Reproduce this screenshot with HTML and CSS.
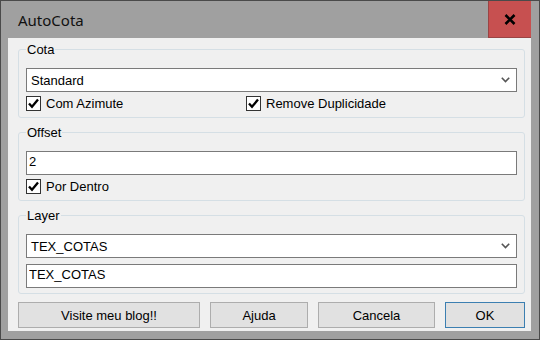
FILE: index.html
```html
<!DOCTYPE html>
<html lang="pt">
<head>
  <meta charset="UTF-8">
  <title>AutoCota</title>
  <link rel="stylesheet" href="styles.css">
</head>
<body>
  <div class="window">
    <div class="titlebar">
      <span class="title">AutoCota</span>
      <div class="close">
        <svg width="12" height="11" viewBox="0 0 12 11"><path d="M1.5 1 L10.5 10 M10.5 1 L1.5 10" stroke="#000" stroke-width="2.6" fill="none"/></svg>
      </div>
    </div>

    <div class="client">
      <fieldset class="group">
        <legend>Cota</legend>
        <div class="combo">
          <span>Standard</span>
          <svg class="chevron" width="9" height="6" viewBox="0 0 9 6"><path d="M0.8 0.8 L4.5 4.6 L8.2 0.8" stroke="#555" stroke-width="1.6" fill="none"/></svg>
        </div>
        <div class="checks">
          <label class="check">
            <span class="box"><svg width="13" height="13" viewBox="0 0 13 13"><path d="M2 6.5 L5 9.8 L11 2.6" stroke="#000" stroke-width="2.3" fill="none"/></svg></span>
            Com Azimute
          </label>
          <label class="check">
            <span class="box"><svg width="13" height="13" viewBox="0 0 13 13"><path d="M2 6.5 L5 9.8 L11 2.6" stroke="#000" stroke-width="2.3" fill="none"/></svg></span>
            Remove Duplicidade
          </label>
        </div>
      </fieldset>

      <fieldset class="group">
        <legend>Offset</legend>
        <input class="field" type="text" value="2">
        <div class="checks">
          <label class="check">
            <span class="box"><svg width="13" height="13" viewBox="0 0 13 13"><path d="M2 6.5 L5 9.8 L11 2.6" stroke="#000" stroke-width="2.3" fill="none"/></svg></span>
            Por Dentro
          </label>
        </div>
      </fieldset>

      <fieldset class="group layer">
        <legend>Layer</legend>
        <div class="combo">
          <span>TEX_COTAS</span>
          <svg class="chevron" width="9" height="6" viewBox="0 0 9 6"><path d="M0.8 0.8 L4.5 4.6 L8.2 0.8" stroke="#555" stroke-width="1.6" fill="none"/></svg>
        </div>
        <input class="field" type="text" value="TEX_COTAS">
      </fieldset>

      <div class="buttons">
        <button class="btn blog">Visite meu blog!!</button>
        <button class="btn help">Ajuda</button>
        <button class="btn cancel">Cancela</button>
        <button class="btn ok">OK</button>
      </div>
    </div>
  </div>
</body>
</html>
```

FILE: styles.css
```css
body {
  margin: 0;
  font-family: "Liberation Sans", Arial, sans-serif;
  font-size: 13px;
  color: #000;
}
/* Window frame and title bar */
.window {
  width: 540px;
  height: 340px;
  box-sizing: border-box;
  border: 1px solid #4a4a4a;
  background: #a0a0a0;
  display: flex;
  flex-direction: column;
}
.titlebar {
  height: 37px;
  display: flex;
  align-items: center;
  justify-content: space-between;
}
.title {
  font-family: "Noto Sans", "Open Sans", sans-serif;
  font-size: 15px;
  padding-left: 17px;
  color: #111;
}
.close {
  width: 43px;
  height: 37px;
  margin-right: 8px;
  box-sizing: border-box;
  background: #c75050;
  border-left: 1px solid #9a4444;
  border-bottom: 1px solid #9a4444;
  display: flex;
  align-items: center;
  justify-content: center;
}
/* Dialog body */
.client {
  margin: 0 8px 0 7px;
  height: 293px;
  box-sizing: border-box;
  padding: 4px 6px 7px 10px;
  background: #f0f0f0;
  display: flex;
  flex-direction: column;
}
.group {
  margin: 0;
  padding: 11px 7px 5px;
  border: 1px solid #d5dfe5;
  border-radius: 3px;
  min-inline-size: 0;
}
.group + .group {
  margin-top: 7px;
}
.group legend {
  padding: 0 1px;
  line-height: 15px;
}
/* Combo boxes and text fields */
.combo {
  height: 24px;
  box-sizing: border-box;
  border: 1px solid #7a7a7a;
  background: #fff;
  padding: 0 6px 0 4px;
  display: flex;
  align-items: center;
  justify-content: space-between;
}
.field {
  display: block;
  width: 100%;
  height: 24px;
  box-sizing: border-box;
  margin: 0;
  border: 1px solid #7a7a7a;
  padding: 0 2px 4px;
  font: inherit;
  color: #000;
  background: #fff;
  outline: none;
}
.layer .field {
  margin-top: 6px;
}
/* Checkboxes */
.checks {
  display: grid;
  grid-template-columns: 220px auto;
  height: 18px;
  margin-top: 2px;
  align-items: center;
}
.check {
  display: flex;
  align-items: center;
  gap: 5px;
}
.box {
  width: 15px;
  height: 15px;
  box-sizing: border-box;
  border: 1px solid #333;
  background: #fff;
  display: flex;
}
/* Bottom buttons */
.buttons {
  display: flex;
  gap: 10px;
  margin-top: 8px;
}
.btn {
  height: 26px;
  box-sizing: border-box;
  margin: 0;
  padding: 0;
  border: 1px solid #adadad;
  background: #e1e1e1;
  font: inherit;
  color: #000;
}
.blog { width: 182px; }
.help { width: 98px; }
.cancel { width: 117px; }
.ok {
  width: 80px;
  border-color: #3c7fb1;
}
```
